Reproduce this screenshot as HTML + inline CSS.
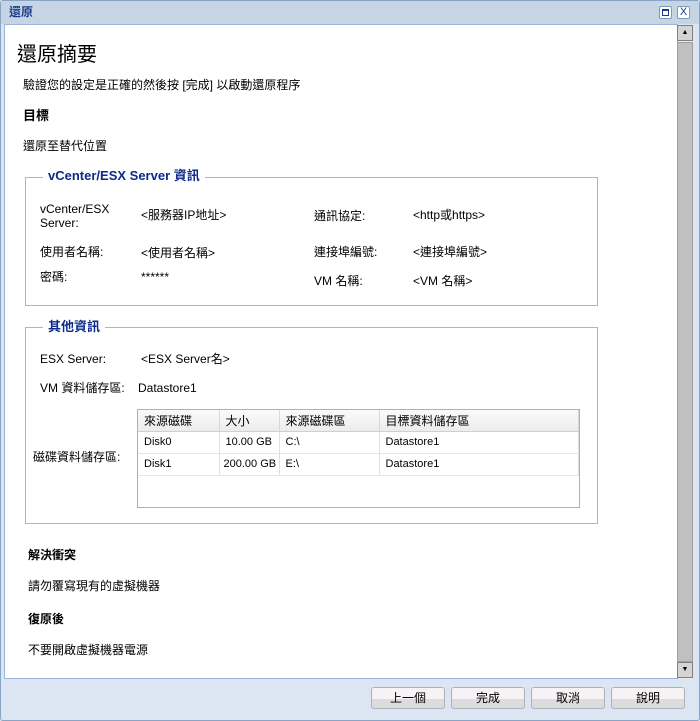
<!DOCTYPE html>
<html><head><meta charset="utf-8"><style>
*{margin:0;padding:0;box-sizing:border-box}
body{width:700px;height:721px;position:relative;overflow:hidden;background:#dce6f2;font-family:"Liberation Sans","Noto Sans CJK TC",sans-serif;font-size:12px;color:#000}
.a{position:absolute;white-space:nowrap;line-height:14px}
.b{font-weight:bold}
.fs{position:absolute;border:1px solid #b4b4be}
.lg{position:absolute;background:#fff;color:#0b2a8a;font-weight:bold;font-size:13px;padding:0 5px;line-height:16px}
.btn{position:absolute;top:687px;width:74px;height:22px;border:1px solid #b0b0b8;border-radius:3px;background:linear-gradient(#f6f2f6 0,#f6f2f6 55%,#dcdcdc 55%,#dcdcdc 100%);text-align:center;line-height:20px;font-size:12px}
table{table-layout:fixed}
td{border-right:1px solid #e0e0e0;border-bottom:1px solid #e6e6e6;padding-left:6px;height:22px;font-size:11px;white-space:nowrap;overflow:hidden}
th{font-weight:normal;text-align:left;padding-left:6px;height:21px;border-right:1px solid #d8d8d8;border-bottom:1px solid #d0d0d0;background:linear-gradient(#fafafa,#ececec);font-size:12px}
</style></head><body>
<div style="position:absolute;left:0;top:0;width:700px;height:721px;border:1px solid #8aa4c8;border-radius:3px"></div>
<div style="position:absolute;left:1px;top:1px;width:698px;height:23px;background:#c7d4e4"></div>
<div class="a b" style="left:9px;top:5px;color:#1a3c8c;font-size:12px">還原</div>
<div style="position:absolute;left:659px;top:6px;width:13px;height:13px;border:1px solid #7f9ac0;background:#fff;border-radius:2px"><div style="margin:2px;height:7px;border:1px solid #1a3c8c;border-top-width:2px"></div></div>
<div style="position:absolute;left:677px;top:6px;width:13px;height:13px;border:1px solid #7f9ac0;background:#fff;border-radius:2px;font-size:11px;line-height:11px;text-align:center;color:#1a3c8c">X</div>
<div style="position:absolute;left:4px;top:24px;width:674px;height:655px;background:#fff;border:1px solid #9ab4d8;border-right:none"></div>
<div style="position:absolute;left:677px;top:25px;width:16px;height:654px;background:#e8e8e8;border-left:1px solid #a0a0a0"></div>
<div style="position:absolute;left:677px;top:25px;width:16px;height:16px;background:#d4d4d4;border:1px solid #808080;font-size:7px;text-align:center;line-height:14px">▲</div>
<div style="position:absolute;left:677px;top:42px;width:16px;height:620px;background:#c0c0c0;border:1px solid #a0a0a0"></div>
<div style="position:absolute;left:677px;top:662px;width:16px;height:16px;background:#d4d4d4;border:1px solid #808080;font-size:7px;text-align:center;line-height:14px">▼</div>

<div class="a" style="left:17px;top:44px;font-size:20px;line-height:22px">還原摘要</div>
<div class="a" style="left:23px;top:78px">驗證您的設定是正確的然後按 [完成] 以啟動還原程序</div>
<div class="a b" style="left:23px;top:109px;font-size:13px">目標</div>
<div class="a" style="left:23px;top:139px">還原至替代位置</div>

<div class="fs" style="left:25px;top:177px;width:573px;height:129px"></div>
<div class="lg" style="left:43px;top:168px">vCenter/ESX Server 資訊</div>
<div class="a" style="left:40px;top:202px">vCenter/ESX<br>Server:</div>
<div class="a" style="left:141px;top:208px">&lt;服務器IP地址&gt;</div>
<div class="a" style="left:314px;top:209px">通訊協定:</div>
<div class="a" style="left:413px;top:208px">&lt;http或https&gt;</div>
<div class="a" style="left:40px;top:245px">使用者名稱:</div>
<div class="a" style="left:141px;top:246px">&lt;使用者名稱&gt;</div>
<div class="a" style="left:314px;top:245px">連接埠編號:</div>
<div class="a" style="left:413px;top:245px">&lt;連接埠編號&gt;</div>
<div class="a" style="left:40px;top:270px">密碼:</div>
<div class="a" style="left:141px;top:270px">******</div>
<div class="a" style="left:314px;top:274px">VM 名稱:</div>
<div class="a" style="left:413px;top:274px">&lt;VM 名稱&gt;</div>

<div class="fs" style="left:25px;top:327px;width:573px;height:197px"></div>
<div class="lg" style="left:43px;top:319px">其他資訊</div>
<div class="a" style="left:40px;top:352px">ESX Server:</div>
<div class="a" style="left:141px;top:352px">&lt;ESX Server名&gt;</div>
<div class="a" style="left:40px;top:381px">VM 資料儲存區:</div>
<div class="a" style="left:138px;top:381px">Datastore1</div>
<div class="a" style="left:33px;top:450px">磁碟資料儲存區:</div>
<div style="position:absolute;left:137px;top:409px;width:443px;height:99px;border:1px solid #9ab4d8;background:#fff">
<table style="border-collapse:collapse;width:441px"><colgroup><col style="width:81px"><col style="width:60px"><col style="width:100px"><col></colgroup>
<tr><th>來源磁碟</th><th>大小</th><th>來源磁碟區</th><th>目標資料儲存區</th></tr>
<tr><td>Disk0</td><td>10.00 GB</td><td>C:\</td><td>Datastore1</td></tr>
<tr><td>Disk1</td><td style="padding-left:4px">200.00 GB</td><td>E:\</td><td>Datastore1</td></tr></table></div>

<div class="a b" style="left:28px;top:548px">解決衝突</div>
<div class="a" style="left:28px;top:579px">請勿覆寫現有的虛擬機器</div>
<div class="a b" style="left:28px;top:612px">復原後</div>
<div class="a" style="left:28px;top:643px">不要開啟虛擬機器電源</div>

<div class="btn" style="left:371px">上一個</div>
<div class="btn" style="left:451px">完成</div>
<div class="btn" style="left:531px">取消</div>
<div class="btn" style="left:611px">說明</div>
</body></html>
